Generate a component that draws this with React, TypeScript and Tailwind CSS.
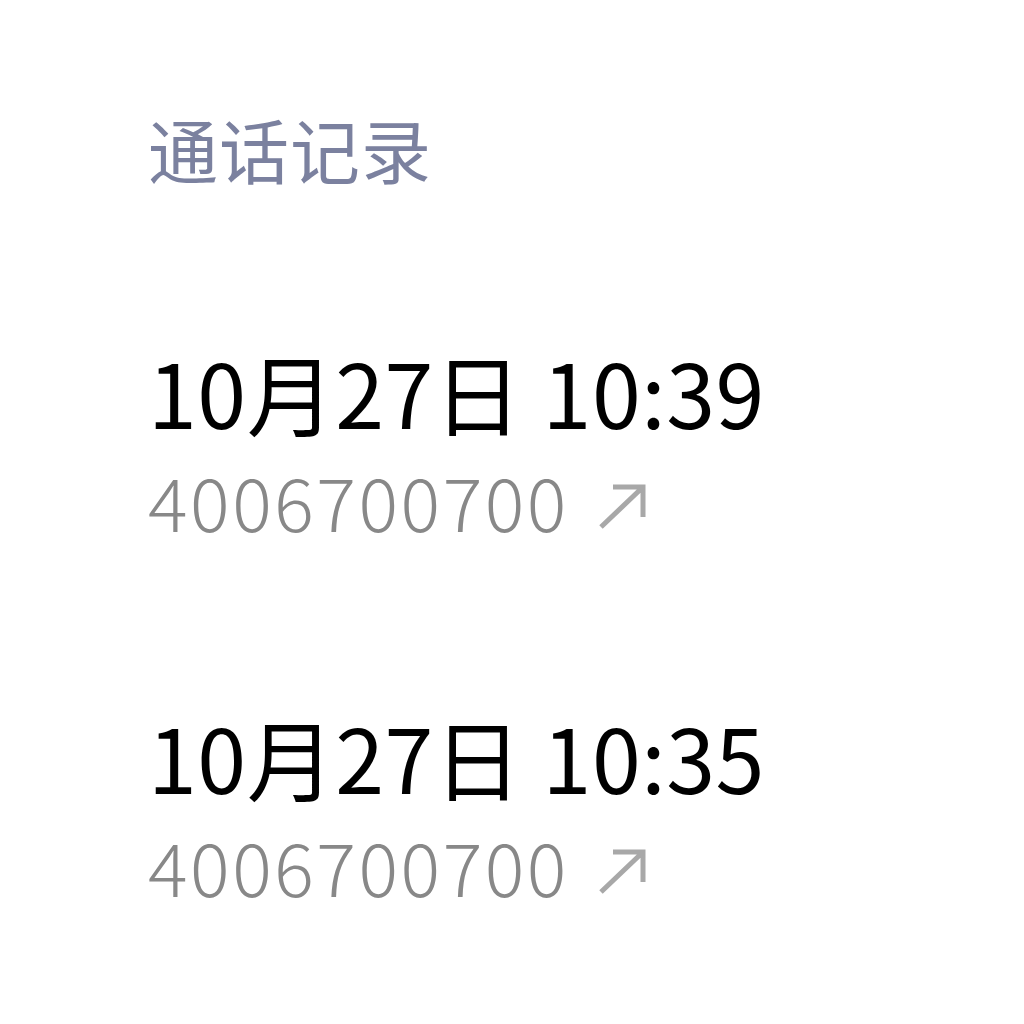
import React from "react";

const font = { fontFamily: '"Noto Sans CJK SC", "Noto Sans", sans-serif' };

function Arrow() {
  return (
    <svg width="56" height="50" viewBox="0 0 56 50" className="ml-[26px] mt-[12px] text-[#a8a8a8]" fill="none">
      <path d="M6 46 L48 6 M18 6 H48 V36" stroke="currentColor" strokeWidth="5" strokeLinecap="butt" strokeLinejoin="miter" />
    </svg>
  );
}

function Entry({ time, phone, first }: { time: string; phone: string; first?: boolean }) {
  return (
    <div className={first ? "mt-[163px]" : "mt-[175px]"}>
      <div className="text-[88px] leading-none text-black font-normal tracking-[0.5px]">{time}</div>
      <div className="mt-[28px] flex items-center text-[74px] leading-none text-[#888888] font-light">
        <span className="tracking-[2.5px]">{phone}</span>
        <Arrow />
      </div>
    </div>
  );
}

export default function App() {
  return (
    <div className="w-[1024px] h-[1024px] bg-white overflow-hidden pl-[148px] pt-[114px]" style={font}>
      <div className="text-[70px] leading-none text-[#7b819f] tracking-[1px]">通话记录</div>
      <Entry time="10月27日 10:39" phone="4006700700" first />
      <Entry time="10月27日 10:35" phone="4006700700" />
    </div>
  );
}
